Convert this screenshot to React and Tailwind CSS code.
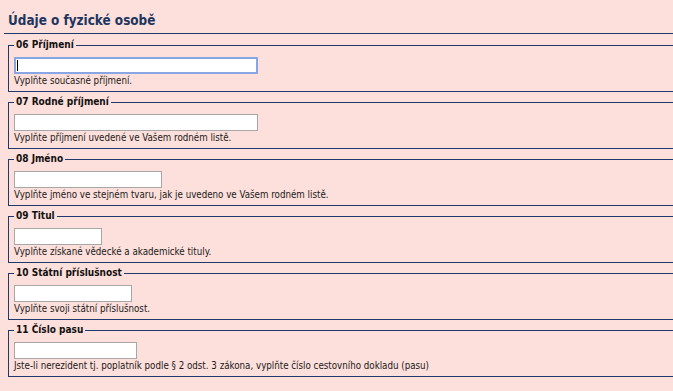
const fields = [
  { label: "06 Příjmení", help: "Vyplňte současné příjmení.", w: "w-[244px]", focus: true },
  { label: "07 Rodné příjmení", help: "Vyplňte příjmení uvedené ve Vašem rodném listě.", w: "w-[244px]" },
  { label: "08 Jméno", help: "Vyplňte jméno ve stejném tvaru, jak je uvedeno ve Vašem rodném listě.", w: "w-[148px]" },
  { label: "09 Titul", help: "Vyplňte získané vědecké a akademické tituly.", w: "w-[88px]" },
  { label: "10 Státní příslušnost", help: "Vyplňte svoji státní příslušnost.", w: "w-[118px]" },
  {
    label: "11 Číslo pasu",
    help: "Jste-li nerezident tj. poplatník podle § 2 odst. 3 zákona, vyplňte číslo cestovního dokladu (pasu)",
    w: "w-[123px]",
  },
];

const Field = ({ label, help, w, focus }) => {
  return (
    <fieldset className="mb-[4px] ml-[8px] w-[700px] border border-[#1d3a6c] pb-[4px] pl-[5px] pt-[6px]">
      <legend className="px-[2px] text-[10px] font-bold leading-[12px] text-[#111]">{label}</legend>
      <div className={`relative h-[17px] ${w}`}>
        <input
          type="text"
          readOnly
          className={
            focus
              ? "block h-full w-full border-2 border-[#87a6e3] bg-white outline-none"
              : "block h-full w-full border border-[#a7a7a7] bg-white outline-none"
          }
        />
        {focus && <span className="absolute left-[3px] top-[3px] h-[11px] w-[1px] bg-black" />}
      </div>
      <div className="mt-[1px] text-[9.7px] leading-[12px] text-[#1a1a1a]">{help}</div>
    </fieldset>
  );
};

export default function App() {
  return (
    <div
      className="h-[391px] w-[673px] overflow-hidden bg-[#fddfdb]"
      style={{ fontFamily: '"DejaVu Sans Condensed", "Liberation Sans", sans-serif', fontStretch: "condensed" }}
    >
      <div className="ml-[4px] border-b border-[#1d3a6c] pb-[4px] pl-[4px] pt-[13px] text-[13.4px] font-bold leading-[16px] text-[#1c3660]">
        Údaje o fyzické osobě
      </div>
      <div className="pt-[5px]">
        {fields.map((f) => (
          <Field key={f.label} {...f} />
        ))}
      </div>
    </div>
  );
}
